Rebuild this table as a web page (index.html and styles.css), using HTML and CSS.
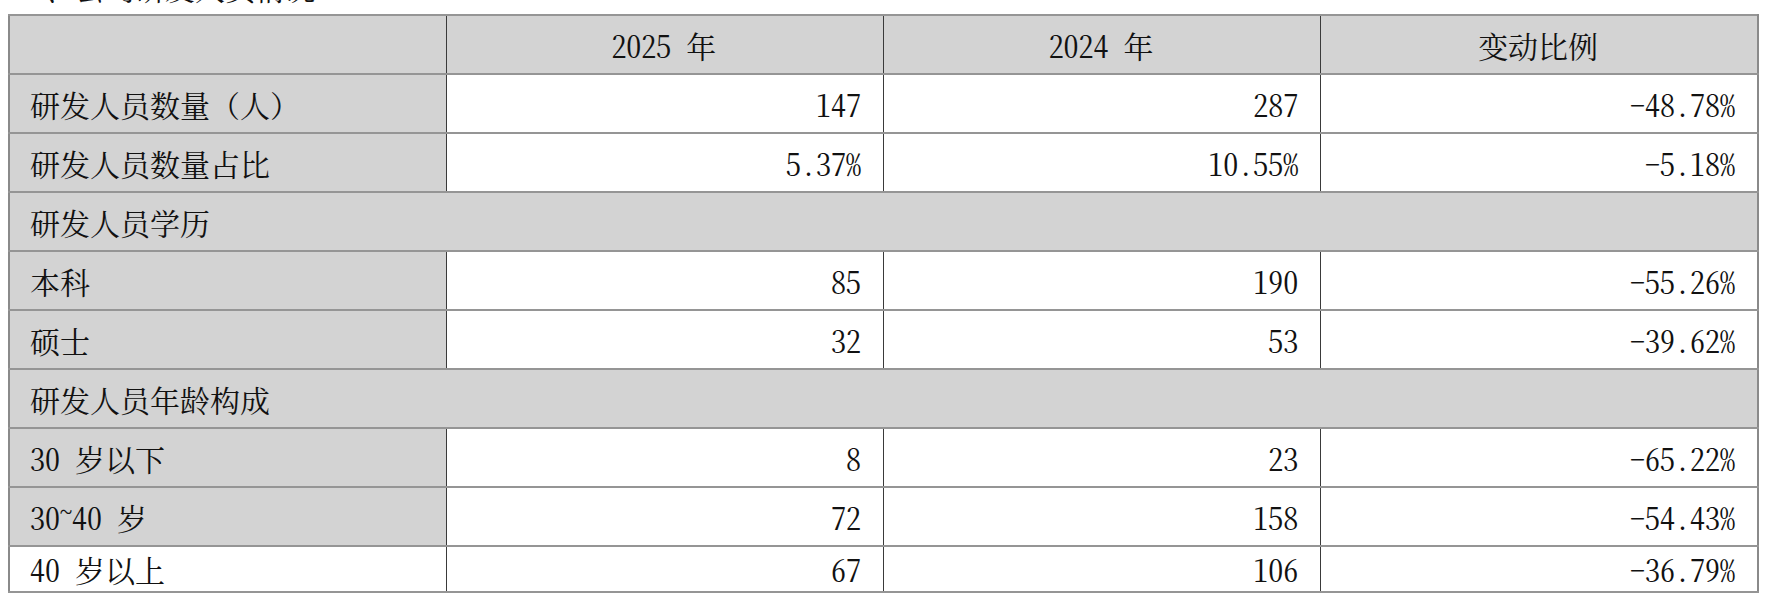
FILE: index.html
```html
<!DOCTYPE html>
<html lang="zh-CN">
<head>
<meta charset="utf-8">
<link rel="stylesheet" href="styles.css">
</head>
<body>
<div class="title"><span class="title-text">4、公司研发人员情况</span></div>
<table class="data">
  <colgroup><col><col><col><col></colgroup>
  <tr class="head"><td class="label"></td><td>2025 年</td><td>2024 年</td><td>变动比例</td></tr>
  <tr><td class="label">研发人员数量<span class="fw">（人）</span></td><td class="num">147</td><td class="num">287</td><td class="num">-48.78%</td></tr>
  <tr><td class="label">研发人员数量占比</td><td class="num">5.37%</td><td class="num">10.55%</td><td class="num">-5.18%</td></tr>
  <tr class="section"><td colspan="4">研发人员学历</td></tr>
  <tr><td class="label">本科</td><td class="num">85</td><td class="num">190</td><td class="num">-55.26%</td></tr>
  <tr><td class="label">硕士</td><td class="num">32</td><td class="num">53</td><td class="num">-39.62%</td></tr>
  <tr class="section"><td colspan="4">研发人员年龄构成</td></tr>
  <tr><td class="label">30 岁以下</td><td class="num">8</td><td class="num">23</td><td class="num">-65.22%</td></tr>
  <tr><td class="label">30<span class="tilde">~</span>40 岁</td><td class="num">72</td><td class="num">158</td><td class="num">-54.43%</td></tr>
  <tr class="last"><td class="label plain">40 岁以上</td><td class="num">67</td><td class="num">106</td><td class="num">-36.79%</td></tr>
</table>
</body>
</html>
```
FILE: styles.css
```css
html, body {
  background: #fff;
}
body {
  margin: 0 8px;
  font-family: "Noto Serif CJK SC", "Liberation Serif", "Noto Sans CJK SC", serif;
  font-feature-settings: "hwid" 1;
  color: #111;
  overflow: hidden;
}
.fw {
  font-feature-settings: "hwid" 0;
}
.tilde {
  display: inline-block;
  font-size: 0.8em;
  vertical-align: 0.35em;
  line-height: 1;
}
.title {
  height: 14px;
  overflow: hidden;
  font-size: 30px;
}
.title-text {
  display: block;
  line-height: 30px;
  margin-top: -28px;
  padding-left: 22px;
}
.data {
  border-collapse: collapse;
  width: 1751px;
  table-layout: fixed;
  font-size: 30px;
}
.data td {
  height: 57px;
  padding: 0 22px 0 20px;
  border-top: 2px solid #959595;
  border-bottom: 2px solid #959595;
  border-left: 1px solid #3a3a3a;
  border-right: 1px solid #3a3a3a;
  background: #fff;
  white-space: nowrap;
  vertical-align: middle;
}
.data td:first-child {
  border-left: 2px solid #8a8a8a;
}
.data td:last-child {
  border-right: 2px solid #8a8a8a;
}
.data .head td {
  background: #d3d3d3;
  text-align: center;
}
.data td.label {
  background: #d3d3d3;
  text-align: left;
}
.data td.label.plain {
  background: #fff;
}
.data .section td {
  background: #d3d3d3;
  text-align: left;
}
.data td.num {
  text-align: right;
}
.data .last td {
  height: 43px;
}
```
